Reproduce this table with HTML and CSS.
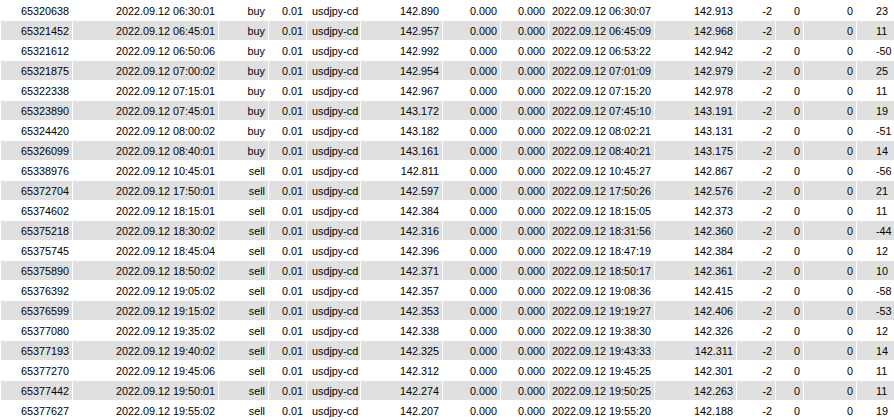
FILE: index.html
```html
<!DOCTYPE html>
<html>
<head>
<meta charset="utf-8">
<link rel="stylesheet" href="styles.css">
</head>
<body>
<div class="sheet">
<div class="row"><span class="c">65320638</span><span class="c">2022.09.12 06:30:01</span><span class="c">buy</span><span class="c">0.01</span><span class="c l">usdjpy-cd</span><span class="c">142.890</span><span class="c">0.000</span><span class="c">0.000</span><span class="c">2022.09.12 06:30:07</span><span class="c">142.913</span><span class="c">-2</span><span class="c">0</span><span class="c">0</span><span class="c p">23</span></div>
<div class="row"><span class="c">65321452</span><span class="c">2022.09.12 06:45:01</span><span class="c">buy</span><span class="c">0.01</span><span class="c l">usdjpy-cd</span><span class="c">142.957</span><span class="c">0.000</span><span class="c">0.000</span><span class="c">2022.09.12 06:45:09</span><span class="c">142.968</span><span class="c">-2</span><span class="c">0</span><span class="c">0</span><span class="c p">11</span></div>
<div class="row"><span class="c">65321612</span><span class="c">2022.09.12 06:50:06</span><span class="c">buy</span><span class="c">0.01</span><span class="c l">usdjpy-cd</span><span class="c">142.992</span><span class="c">0.000</span><span class="c">0.000</span><span class="c">2022.09.12 06:53:22</span><span class="c">142.942</span><span class="c">-2</span><span class="c">0</span><span class="c">0</span><span class="c p">-50</span></div>
<div class="row"><span class="c">65321875</span><span class="c">2022.09.12 07:00:02</span><span class="c">buy</span><span class="c">0.01</span><span class="c l">usdjpy-cd</span><span class="c">142.954</span><span class="c">0.000</span><span class="c">0.000</span><span class="c">2022.09.12 07:01:09</span><span class="c">142.979</span><span class="c">-2</span><span class="c">0</span><span class="c">0</span><span class="c p">25</span></div>
<div class="row"><span class="c">65322338</span><span class="c">2022.09.12 07:15:01</span><span class="c">buy</span><span class="c">0.01</span><span class="c l">usdjpy-cd</span><span class="c">142.967</span><span class="c">0.000</span><span class="c">0.000</span><span class="c">2022.09.12 07:15:20</span><span class="c">142.978</span><span class="c">-2</span><span class="c">0</span><span class="c">0</span><span class="c p">11</span></div>
<div class="row"><span class="c">65323890</span><span class="c">2022.09.12 07:45:01</span><span class="c">buy</span><span class="c">0.01</span><span class="c l">usdjpy-cd</span><span class="c">143.172</span><span class="c">0.000</span><span class="c">0.000</span><span class="c">2022.09.12 07:45:10</span><span class="c">143.191</span><span class="c">-2</span><span class="c">0</span><span class="c">0</span><span class="c p">19</span></div>
<div class="row"><span class="c">65324420</span><span class="c">2022.09.12 08:00:02</span><span class="c">buy</span><span class="c">0.01</span><span class="c l">usdjpy-cd</span><span class="c">143.182</span><span class="c">0.000</span><span class="c">0.000</span><span class="c">2022.09.12 08:02:21</span><span class="c">143.131</span><span class="c">-2</span><span class="c">0</span><span class="c">0</span><span class="c p">-51</span></div>
<div class="row"><span class="c">65326099</span><span class="c">2022.09.12 08:40:01</span><span class="c">buy</span><span class="c">0.01</span><span class="c l">usdjpy-cd</span><span class="c">143.161</span><span class="c">0.000</span><span class="c">0.000</span><span class="c">2022.09.12 08:40:21</span><span class="c">143.175</span><span class="c">-2</span><span class="c">0</span><span class="c">0</span><span class="c p">14</span></div>
<div class="row"><span class="c">65338976</span><span class="c">2022.09.12 10:45:01</span><span class="c">sell</span><span class="c">0.01</span><span class="c l">usdjpy-cd</span><span class="c">142.811</span><span class="c">0.000</span><span class="c">0.000</span><span class="c">2022.09.12 10:45:27</span><span class="c">142.867</span><span class="c">-2</span><span class="c">0</span><span class="c">0</span><span class="c p">-56</span></div>
<div class="row"><span class="c">65372704</span><span class="c">2022.09.12 17:50:01</span><span class="c">sell</span><span class="c">0.01</span><span class="c l">usdjpy-cd</span><span class="c">142.597</span><span class="c">0.000</span><span class="c">0.000</span><span class="c">2022.09.12 17:50:26</span><span class="c">142.576</span><span class="c">-2</span><span class="c">0</span><span class="c">0</span><span class="c p">21</span></div>
<div class="row"><span class="c">65374602</span><span class="c">2022.09.12 18:15:01</span><span class="c">sell</span><span class="c">0.01</span><span class="c l">usdjpy-cd</span><span class="c">142.384</span><span class="c">0.000</span><span class="c">0.000</span><span class="c">2022.09.12 18:15:05</span><span class="c">142.373</span><span class="c">-2</span><span class="c">0</span><span class="c">0</span><span class="c p">11</span></div>
<div class="row"><span class="c">65375218</span><span class="c">2022.09.12 18:30:02</span><span class="c">sell</span><span class="c">0.01</span><span class="c l">usdjpy-cd</span><span class="c">142.316</span><span class="c">0.000</span><span class="c">0.000</span><span class="c">2022.09.12 18:31:56</span><span class="c">142.360</span><span class="c">-2</span><span class="c">0</span><span class="c">0</span><span class="c p">-44</span></div>
<div class="row"><span class="c">65375745</span><span class="c">2022.09.12 18:45:04</span><span class="c">sell</span><span class="c">0.01</span><span class="c l">usdjpy-cd</span><span class="c">142.396</span><span class="c">0.000</span><span class="c">0.000</span><span class="c">2022.09.12 18:47:19</span><span class="c">142.384</span><span class="c">-2</span><span class="c">0</span><span class="c">0</span><span class="c p">12</span></div>
<div class="row"><span class="c">65375890</span><span class="c">2022.09.12 18:50:02</span><span class="c">sell</span><span class="c">0.01</span><span class="c l">usdjpy-cd</span><span class="c">142.371</span><span class="c">0.000</span><span class="c">0.000</span><span class="c">2022.09.12 18:50:17</span><span class="c">142.361</span><span class="c">-2</span><span class="c">0</span><span class="c">0</span><span class="c p">10</span></div>
<div class="row"><span class="c">65376392</span><span class="c">2022.09.12 19:05:02</span><span class="c">sell</span><span class="c">0.01</span><span class="c l">usdjpy-cd</span><span class="c">142.357</span><span class="c">0.000</span><span class="c">0.000</span><span class="c">2022.09.12 19:08:36</span><span class="c">142.415</span><span class="c">-2</span><span class="c">0</span><span class="c">0</span><span class="c p">-58</span></div>
<div class="row"><span class="c">65376599</span><span class="c">2022.09.12 19:15:02</span><span class="c">sell</span><span class="c">0.01</span><span class="c l">usdjpy-cd</span><span class="c">142.353</span><span class="c">0.000</span><span class="c">0.000</span><span class="c">2022.09.12 19:19:27</span><span class="c">142.406</span><span class="c">-2</span><span class="c">0</span><span class="c">0</span><span class="c p">-53</span></div>
<div class="row"><span class="c">65377080</span><span class="c">2022.09.12 19:35:02</span><span class="c">sell</span><span class="c">0.01</span><span class="c l">usdjpy-cd</span><span class="c">142.338</span><span class="c">0.000</span><span class="c">0.000</span><span class="c">2022.09.12 19:38:30</span><span class="c">142.326</span><span class="c">-2</span><span class="c">0</span><span class="c">0</span><span class="c p">12</span></div>
<div class="row"><span class="c">65377193</span><span class="c">2022.09.12 19:40:02</span><span class="c">sell</span><span class="c">0.01</span><span class="c l">usdjpy-cd</span><span class="c">142.325</span><span class="c">0.000</span><span class="c">0.000</span><span class="c">2022.09.12 19:43:33</span><span class="c">142.311</span><span class="c">-2</span><span class="c">0</span><span class="c">0</span><span class="c p">14</span></div>
<div class="row"><span class="c">65377270</span><span class="c">2022.09.12 19:45:06</span><span class="c">sell</span><span class="c">0.01</span><span class="c l">usdjpy-cd</span><span class="c">142.312</span><span class="c">0.000</span><span class="c">0.000</span><span class="c">2022.09.12 19:45:25</span><span class="c">142.301</span><span class="c">-2</span><span class="c">0</span><span class="c">0</span><span class="c p">11</span></div>
<div class="row"><span class="c">65377442</span><span class="c">2022.09.12 19:50:01</span><span class="c">sell</span><span class="c">0.01</span><span class="c l">usdjpy-cd</span><span class="c">142.274</span><span class="c">0.000</span><span class="c">0.000</span><span class="c">2022.09.12 19:50:25</span><span class="c">142.263</span><span class="c">-2</span><span class="c">0</span><span class="c">0</span><span class="c p">11</span></div>
<div class="row"><span class="c">65377627</span><span class="c">2022.09.12 19:55:02</span><span class="c">sell</span><span class="c">0.01</span><span class="c l">usdjpy-cd</span><span class="c">142.207</span><span class="c">0.000</span><span class="c">0.000</span><span class="c">2022.09.12 19:55:20</span><span class="c">142.188</span><span class="c">-2</span><span class="c">0</span><span class="c">0</span><span class="c p">19</span></div>
</div>
</body>
</html>
```

FILE: styles.css
```css
html, body {
  margin: 0;
  padding: 0;
  background: #ffffff;
}

.sheet {
  width: 894px;
  height: 420px;
  overflow: hidden;
  padding-top: 1px;
  box-sizing: border-box;
  display: flex;
  flex-direction: column;
  row-gap: 1px;
  font-family: "Liberation Sans", Arial, sans-serif;
  font-size: 10.8px;
  color: #000000;
}

.row {
  display: grid;
  grid-template-columns: 71px 145px 49px 37px 53px 81px 57px 47px 105px 81px 38px 27px 52px 60px;
  column-gap: 1px;
  padding-left: 1px;
  height: 19px;
  flex: none;
}

.c {
  display: block;
  box-sizing: border-box;
  height: 19px;
  padding: 2px 3px 0 3px;
  line-height: 17px;
  text-align: right;
  white-space: nowrap;
  overflow: hidden;
}

.row:nth-child(even) .c {
  background: #e0e0e0;
}

.c.l {
  text-align: left;
  padding-left: 5px;
}

.c.p {
  text-align: left;
  padding-left: 19px;
}
```
